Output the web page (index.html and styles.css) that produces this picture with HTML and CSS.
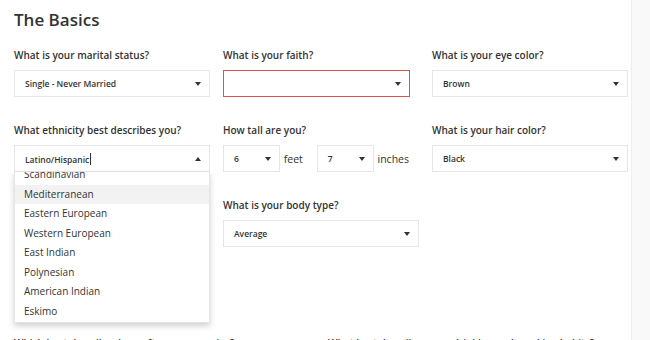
FILE: index.html
```html
<!DOCTYPE html>
<html lang="en">
<head>
    <meta charset="UTF-8">
    <meta name="viewport" content="width=device-width, initial-scale=1.0">
    <title>The Basics</title>
    <link rel="stylesheet" href="styles.css">
</head>
<body>
    <div class="page">
        <main class="content">
            <h2 class="title">The Basics</h2>

            <div class="grid">
                <div class="field">
                    <label>What is your marital status?</label>
                    <div class="select"><span>Single - Never Married</span><i class="arrow"></i></div>
                </div>
                <div class="field">
                    <label>What is your faith?</label>
                    <div class="select error"><span></span><i class="arrow"></i></div>
                </div>
                <div class="field">
                    <label>What is your eye color?</label>
                    <div class="select"><span>Brown</span><i class="arrow"></i></div>
                </div>

                <div class="field combo">
                    <label>What ethnicity best describes you?</label>
                    <div class="select open"><span>Latino/Hispanic<b class="caret"></b></span><i class="arrow up"></i></div>
                    <div class="options">
                        <ul>
                            <li>Scandinavian</li>
                            <li class="active">Mediterranean</li>
                            <li>Eastern European</li>
                            <li>Western European</li>
                            <li>East Indian</li>
                            <li>Polynesian</li>
                            <li>American Indian</li>
                            <li>Eskimo</li>
                        </ul>
                    </div>
                </div>
                <div class="field">
                    <label>How tall are you?</label>
                    <div class="height">
                        <div class="select small"><span>6</span><i class="arrow"></i></div>
                        <span class="unit">feet</span>
                        <div class="select small"><span>7</span><i class="arrow"></i></div>
                        <span class="unit">inches</span>
                    </div>
                </div>
                <div class="field">
                    <label>What is your hair color?</label>
                    <div class="select"><span>Black</span><i class="arrow"></i></div>
                </div>

                <div class="field"></div>
                <div class="field">
                    <label>What is your body type?</label>
                    <div class="select"><span>Average</span><i class="arrow"></i></div>
                </div>
            </div>

            <div class="grid wide">
                <div class="field">
                    <label>Which best describes how often you exercise?</label>
                </div>
                <div class="field">
                    <label>What best describes your drinking and smoking habits?</label>
                </div>
            </div>
        </main>
        <aside class="sidebar"></aside>
    </div>
</body>
</html>
```

FILE: styles.css
```css
body {
    margin: 0;
    font-family: "Open Sans", Arial, sans-serif;
    color: #333;
    background-color: #fff;
}

.page {
    display: flex;
    height: 340px;
    overflow: hidden;
}

.content {
    width: 631px;
    padding: 8px 0 0 14px;
    box-sizing: border-box;
}

.sidebar {
    flex: 1;
    background-color: #f9f9f9;
    border-left: 1px solid #eee;
}

.title {
    margin: 0 0 16px;
    font-size: 17px;
    line-height: 24px;
    font-weight: 600;
}

.grid {
    display: grid;
    grid-template-columns: repeat(3, 196px);
    column-gap: 13px;
    row-gap: 26px;
}

.grid.wide {
    grid-template-columns: repeat(2, 301px);
    margin-top: 89px;
}

.field {
    position: relative;
}

.field label {
    display: block;
    margin-bottom: 8px;
    font-size: 10px;
    line-height: 14px;
    font-weight: 600;
}

.select {
    display: flex;
    align-items: center;
    justify-content: space-between;
    height: 27px;
    padding: 0 8px 0 10px;
    box-sizing: border-box;
    border: 1px solid #e6e6e6;
    background-color: #fff;
    font-size: 8.5px;
    font-weight: 600;
}

.select.error {
    width: 187px;
    border-color: #d9534f;
}

.select.small {
    width: 59px;
}

.arrow {
    width: 0;
    height: 0;
    border-left: 3.5px solid transparent;
    border-right: 3.5px solid transparent;
    border-top: 4px solid #333;
}

.arrow.up {
    border-top: none;
    border-bottom: 4px solid #333;
}

.caret {
    display: inline-block;
    width: 1px;
    height: 12px;
    margin-left: 1px;
    vertical-align: -2px;
    background-color: #333;
}

.height {
    display: flex;
    align-items: center;
    gap: 4px;
}

.unit {
    margin-right: 10px;
    font-size: 10.5px;
}

.options {
    position: absolute;
    left: 0;
    top: 49px;
    width: 196px;
    height: 151px;
    overflow: hidden;
    background-color: #fff;
    border: 1px solid #e6e6e6;
    border-top: none;
    box-sizing: border-box;
    box-shadow: 0 3px 6px rgba(0, 0, 0, 0.18);
    z-index: 2;
}

.options ul {
    list-style: none;
    margin: -7px 0 0;
    padding: 0;
}

.options li {
    height: 19.5px;
    line-height: 19.5px;
    padding-left: 9px;
    font-size: 10px;
}

.options li.active {
    background-color: #f2f2f2;
}
```
